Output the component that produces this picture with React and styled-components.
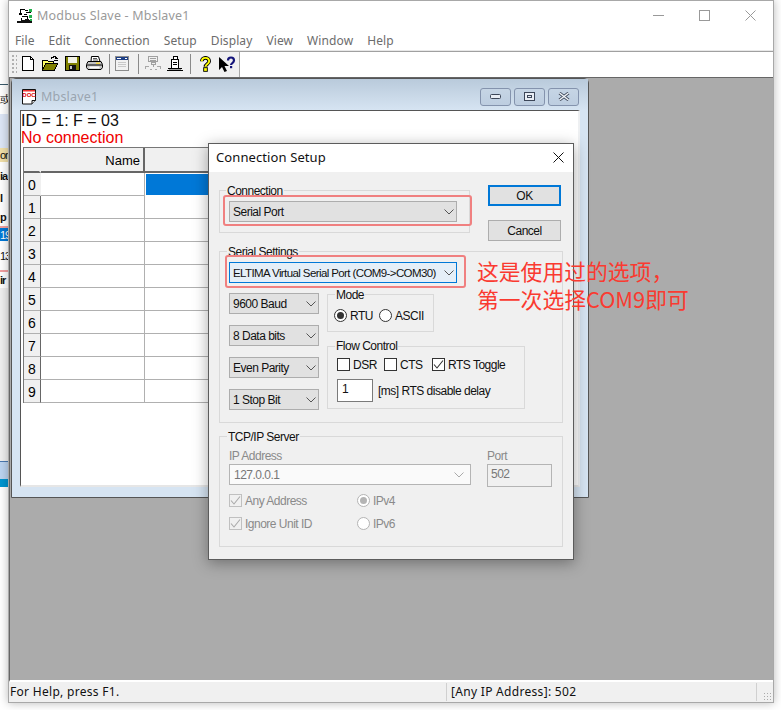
import React from 'react'
import styled, { createGlobalStyle } from 'styled-components'

const GlobalStyle = createGlobalStyle`
  html, body {
    margin: 0;
    padding: 0;
    background: #fff;
  }
  * {
    box-sizing: border-box;
  }
`

const DIALOG_FONT = `"Liberation Sans", Arial, sans-serif`
const UI_FONT = `"Noto Sans", "Open Sans", sans-serif`

const Chevron = ({ color = '#555' }) => (
  <svg width="10" height="6" viewBox="0 0 10 6" style={{ flex: 'none' }}>
    <path d="M.5 .5 5 5 9.500 .5" fill="none" stroke={color} strokeWidth="1" />
  </svg>
)

const Tick = ({ color = '#333' }) => (
  <svg width="11" height="11" viewBox="0 0 11 11">
    <path d="M1 5.500 4 9 10 1.500" fill="none" stroke={color} strokeWidth="1.100" />
  </svg>
)

const AppIcon = () => (
  <svg width="16" height="16" viewBox="0 0 16 16" shapeRendering="crispEdges">
    <path d="M3 1h5v1H3zM3 2h1v3H3zM2 5h3v2H2zM8 2h3v1H8zM9 4h5v1H9zM7 6h3v1H7zM5 8h6v1H5zM10 9h1v2h-1zM4 10h1v2H4z" fill="#000" />
    <path d="M12 1h3v3h-3zM12 7h3v3h-3z" fill="#22b14c" />
    <path d="M0 13h4v-1h4v-1h4v1h3v3H0z" fill="#111" />
    <path d="M13 11h2v2h-2z" fill="#22b14c" />
  </svg>
)

const DocIcon = () => (
  <svg width="16" height="16" viewBox="0 0 16 16">
    <path d="M1.500 .5h13v11l-3.500 3.500h-9.500z" fill="#fff" stroke="#111" />
    <path d="M11 15v-3.500h3.500" fill="#ddd" stroke="#111" />
    <rect x="2" y="1" width="12" height="1.500" fill="#e33" />
    <text x="8" y="8" fontSize="6" fontWeight="700" fontFamily="Liberation Sans" textAnchor="middle" fill="#e00000">DOC</text>
  </svg>
)

const NewIcon = () => (
  <svg width="13" height="15" viewBox="0 0 13 15" shapeRendering="crispEdges">
    <path d="M.5 .5h8l3 3v11H.5z" fill="#fff" stroke="#000" />
    <path d="M8.500 .5v3h3" fill="none" stroke="#000" />
  </svg>
)

const OpenIcon = () => (
  <svg width="18" height="16" viewBox="0 0 18 16" shapeRendering="crispEdges">
    <path d="M1.500 4.500h5l1 1h5v2h-8l-3 7z" fill="#ffff66" stroke="#000" />
    <path d="M1.500 14.500l3-7h12l-3 7z" fill="#808000" stroke="#000" />
    <path d="M9.500 3.500c1-2 3-3 5.500-2.500" fill="none" stroke="#000" />
    <path d="M14 0h1v1h1v1h1v1h-3zM13 4h4v1h-4z" fill="#000" />
  </svg>
)

const SaveIcon = () => (
  <svg width="15" height="15" viewBox="0 0 15 15" shapeRendering="crispEdges">
    <rect x=".5" y=".5" width="14" height="14" fill="#808000" stroke="#000" />
    <rect x="3" y="1" width="9" height="6" fill="#f2f2e6" />
    <rect x="4" y="9" width="7" height="5" fill="#111" />
    <rect x="5" y="10" width="2" height="3" fill="#c8c8c8" />
  </svg>
)

const PrintIcon = () => (
  <svg width="17" height="15" viewBox="0 0 17 15">
    <path d="M5.500 .5h7l1.500 5h-9z" fill="#fff" stroke="#000" />
    <path d="M7 2.500h4M7 4h5" stroke="#555" />
    <path d="M2 5.500h13l1.500 3v3l-1.500 2H2l-1.500-2v-3z" fill="#c4c4c4" stroke="#000" />
    <path d="M1 9h15" stroke="#000" />
    <path d="M3.500 11.500h10" stroke="#fff" strokeWidth="2" />
    <rect x="10" y="6.500" width="4" height="1.500" fill="#f5d84a" />
  </svg>
)

const WindowIcon = () => (
  <svg width="14" height="15" viewBox="0 0 14 15" shapeRendering="crispEdges">
    <rect x=".5" y=".5" width="13" height="14" fill="#f2f2f2" stroke="#8c8c8c" />
    <rect x="1" y="1" width="12" height="3" fill="#1d3f86" />
    <path d="M2 2h4v1H2zM10 2h2v1h-2z" fill="#fff" />
    <path d="M3 6h8v1H3zM3 8h8v1H3zM3 10h8v1H3z" fill="#c9c9c9" />
  </svg>
)

const NetOffIcon = () => (
  <svg width="16" height="15" viewBox="0 0 16 15" shapeRendering="crispEdges">
    <path d="M3.500 .5h9v5h-9zM5 2.500h6M5 4h6M6 6.500h4v2H6zM8 9v2" fill="none" stroke="#a0a0a0" />
    <path d="M0 10h4v1H0zM0 11h1v2H0zM12 10h4v1h-4zM15 11h1v2h-1zM5 13h2v1H5zM10 13h2v1h-2z" fill="#a8a8a8" />
  </svg>
)

const PlugIcon = () => (
  <svg width="16" height="16" viewBox="0 0 16 16" shapeRendering="crispEdges">
    <path d="M6 .5h4v3H6zM4.500 3.500h7v9h-7z" fill="#fff" stroke="#000" />
    <path d="M6 6h4M6 8h4" stroke="#000" />
    <path d="M1 12h14v1H1zM0 14h16v1H0z" fill="#000" />
    <rect x="2" y="13" width="12" height="1" fill="#9a9a9a" />
  </svg>
)

const HelpIcon = () => (
  <svg width="11" height="16" viewBox="0 0 12 16">
    <path d="M2 5c0-5 8-5 8 0 0 3-4 3-4 6" fill="none" stroke="#000" strokeWidth="4" />
    <path d="M2 5c0-5 8-5 8 0 0 3-4 3-4 6" fill="none" stroke="#ffff00" strokeWidth="2" />
    <rect x="4" y="12" width="4" height="4" fill="#ffff00" stroke="#000" />
  </svg>
)

const HelpPointerIcon = () => (
  <svg width="17" height="16" viewBox="0 0 17 16">
    <path d="M0 1v13l3-3 2.500 5 2.500-1-2.500-5H10z" fill="#000" />
    <path d="M9 4.500C9 .5 15 .5 15 4.500c0 2.500-3 2.500-3 4.500" fill="none" stroke="#14147a" strokeWidth="2.200" />
    <rect x="11" y="10" width="2.200" height="2.200" fill="#14147a" />
  </svg>
)

const Desktop = styled.div`
  position: relative;
  width: 781px;
  height: 710px;
  overflow: hidden;
  background: #fff;
`

// the window lying behind Modbus Slave, only a sliver of it is visible
const BackWindow = styled.div`
  position: absolute;
  left: 0;
  top: 84px;
  width: 8px;
  height: 420px;
  display: flex;
  flex-direction: column;
  overflow: hidden;
  font: 700 11px ${DIALOG_FONT};
  letter-spacing: -1px;
  color: #111;
`

const BackRow = styled.div`
  height: ${p => p.$h}px;
  flex: none;
  display: flex;
  align-items: center;
  white-space: nowrap;
  font-weight: ${p => (p.$thin ? 400 : 700)};
  color: ${p => p.$color || '#111'};
  background: ${p => p.$bg || 'transparent'};
  border-top: ${p => (p.$line ? `1px solid ${p.$line}` : 'none')};
`

const MainWindow = styled.div`
  position: absolute;
  left: 8px;
  top: 0;
  width: 766px;
  height: 703px;
  display: flex;
  flex-direction: column;
  background: #fff;
  border: 1px solid #a8a8a8;
  box-shadow: 0 0 9px rgba(0, 0, 0, 0.28);
`

const TitleBar = styled.div`
  height: 29px;
  flex: none;
  display: flex;
  align-items: center;
  padding-left: 8px;
  font: 12.500px ${UI_FONT};
  color: #9a9a9a;
`

const TitleText = styled.span`
  margin-left: 4px;
  letter-spacing: 0.2px;
  flex: 1;
`

const WinButton = styled.div`
  width: 46px;
  height: 29px;
  display: flex;
  align-items: center;
  justify-content: center;
`

const MenuBar = styled.div`
  height: 21px;
  flex: none;
  display: flex;
  align-items: center;
  gap: 14px;
  padding-left: 6px;
  font: 12px ${UI_FONT};
  letter-spacing: 0.1px;
  color: #6c6c6c;
  border-bottom: 1px solid #e8e8e8;
`

const ToolbarRow = styled.div`
  height: 26px;
  flex: none;
  display: flex;
  border-top: 1px solid #a0a0a0;
`

const Toolbar = styled.div`
  width: 231px;
  display: flex;
  align-items: center;
  background: #f0f0f0;
  border-right: 1px solid #a8a8a8;
  padding: 0 0 2px 2px;
`

const Gripper = styled.div`
  width: 6px;
  height: 20px;
  background-image: radial-gradient(#b0b0b0 0.9px, transparent 1px);
  background-size: 4px 4px;
`

const ToolSlot = styled.div`
  width: 22px;
  height: 24px;
  flex: none;
  display: flex;
  align-items: center;
  justify-content: center;
`

const ToolSep = styled.div`
  width: 1px;
  height: 20px;
  flex: none;
  margin: 0 ${p => p.$right}px 0 ${p => p.$left}px;
  background: #8a8a8a;
`

const MdiArea = styled.div`
  position: relative;
  flex: 1;
  background: #ababab;
  border-top: 1px solid #666;
  border-left: 1px solid #666;
  border-bottom: 2px solid #fff;
`

const StatusBar = styled.div`
  height: 20px;
  flex: none;
  display: flex;
  align-items: center;
  position: relative;
  background: #f0f0f0;
  font: 12px ${UI_FONT};
  letter-spacing: 0.3px;
  color: #111;
`

const StatusPane = styled.div`
  width: ${p => p.$w}px;
  height: 18px;
  flex: none;
  padding-left: ${p => p.$pad}px;
  line-height: 18px;
  border-right: 1px solid #d0d0d0;
  white-space: nowrap;
`

const SizeGrip = styled.div`
  position: absolute;
  right: 1px;
  bottom: 1px;
  width: 9px;
  height: 9px;
  background-image: radial-gradient(#aaa 0.9px, transparent 1px);
  background-size: 3px 3px;
`

const ChildWindow = styled.div`
  position: absolute;
  left: 1px;
  top: 0;
  width: 578px;
  height: 420px;
  display: flex;
  flex-direction: column;
  padding: 0 8px 10px 8px;
  background: #d6e4f2;
  border: 1px solid #555;
  border-radius: 5px 5px 0 0;
`

const ChildTitle = styled.div`
  height: 31px;
  flex: none;
  display: flex;
  align-items: center;
  margin: 0 -8px;
  padding: 4px 9px 0 9px;
  background: linear-gradient(#b9cadb, #d6e4f2);
  font: 12.500px ${UI_FONT};
  color: #9aa5b0;
`

const ChildTitleText = styled.span`
  margin-left: 4px;
  letter-spacing: 0.2px;
  flex: 1;
`

const ChildButton = styled.div`
  width: 31px;
  height: 18px;
  margin-left: 3px;
  display: flex;
  align-items: center;
  justify-content: center;
  border: 1px solid #8493ad;
  border-radius: 3px;
  background: linear-gradient(#c6d5e5, #bdcde0);
`

const ChildClient = styled.div`
  flex: 1;
  padding-top: 2px;
  background: #fff;
  border-top: 1px solid #555;
  border-left: 1px solid #555;
  border-right: 2px solid #eef0f2;
  border-bottom: 2px solid #e6e6e6;
  font: 16px/16.500px ${DIALOG_FONT};
  overflow: hidden;
`

const StatusLine = styled.div`
  color: ${p => p.$color || '#111'};
`

const Sheet = styled.div`
  display: grid;
  grid-template-columns: 17px 104px 110px;
  grid-template-rows: 25px repeat(10, 23px);
  width: max-content;
  margin: 1px 0 0 2px;
  font: 13px ${DIALOG_FONT};
  border-top: 1px solid #777;
  border-left: 1px solid #777;
`

const HeadCell = styled.div`
  display: flex;
  align-items: center;
  justify-content: flex-end;
  padding: 1px 3px 0 0;
  background: #f0f0f0;
  border-right: 2px solid ${p => (p.$dark ? '#666' : '#f0f0f0')};
  border-bottom: 2px solid #666;
`

const RowHead = styled.div`
  display: flex;
  align-items: center;
  justify-content: center;
  padding-top: 1px;
  font-size: 14px;
  background: #f0f0f0;
  border-right: 1px solid ${p => (p.$first ? '#f0f0f0' : '#666')};
  border-bottom: 1px solid #b0b0b0;
`

const Cell = styled.div`
  background: ${p => (p.$selected ? '#0078d7' : '#fff')};
  border-right: 1px solid #b0b0b0;
  border-bottom: 1px solid #b0b0b0;
  outline: ${p => (p.$selected ? '1px solid #fff' : 'none')};
  outline-offset: -1px;
`

const Dialog = styled.div`
  position: absolute;
  left: 208px;
  top: 143px;
  width: 366px;
  height: 417px;
  display: flex;
  flex-direction: column;
  background: #f0f0f0;
  border: 1px solid #5c5c5c;
  box-shadow: 0 3px 14px rgba(0, 0, 0, 0.35);
  font: 12px ${DIALOG_FONT};
  letter-spacing: -0.5px;
  color: #111;
`

const DialogTitle = styled.div`
  height: 28px;
  flex: none;
  display: flex;
  align-items: center;
  justify-content: space-between;
  padding: 0 9px 2px 7px;
  background: #fff;
  font: 13px ${UI_FONT};
  letter-spacing: 0.1px;
`

const DialogBody = styled.div`
  flex: 1;
  padding: 13px 10px 0 10px;
  display: flex;
  flex-direction: column;
`

const TopRow = styled.div`
  display: flex;
  justify-content: space-between;
  width: 342px;
  margin-bottom: 10px;
`

const Group = styled.div`
  position: relative;
  width: ${p => p.$w}px;
  height: ${p => p.$h}px;
  flex: none;
  margin-top: ${p => p.$top || 0}px;
  padding: ${p => p.$pad || '0'};
  border: 1px solid #d9d9d9;
`

const Legend = styled.span`
  position: absolute;
  left: ${p => p.$left ?? 7}px;
  top: ${p => p.$top ?? -6}px;
  padding: 0 1px;
  line-height: 13px;
  background: #f0f0f0;
`

const ButtonColumn = styled.div`
  display: flex;
  flex-direction: column;
  gap: 14px;
`

const DialogButton = styled.div`
  width: 73px;
  height: 21px;
  display: flex;
  align-items: center;
  justify-content: center;
  background: #e1e1e1;
  border: ${p => (p.$primary ? '2px solid #0078d7' : '1px solid #adadad')};
`

const Select = styled.div`
  width: ${p => p.$w}px;
  height: 21px;
  flex: none;
  display: flex;
  align-items: center;
  padding: 0 2px 0 3px;
  background: ${p => (p.$focus ? '#e5eff8' : '#e1e1e1')};
  border: 1px solid ${p => (p.$focus ? '#0078d7' : '#adadad')};
`

const SelectText = styled.span`
  flex: 1;
  min-width: 0;
  margin-right: 4px;
  overflow: hidden;
  white-space: nowrap;
  font-size: ${p => (p.$tight ? '11.500px' : 'inherit')};
  letter-spacing: ${p => (p.$tight ? '-0.6px' : 'inherit')};
`

const SerialRow = styled.div`
  display: flex;
  margin-top: 10px;
`

const SelectStack = styled.div`
  width: 98px;
  display: flex;
  flex-direction: column;
  gap: 11px;
`

const SideStack = styled.div`
  display: flex;
  flex-direction: column;
`

const OptionRow = styled.div`
  display: flex;
  align-items: center;
`

const Option = styled.div`
  width: ${p => (p.$w ? `${p.$w}px` : 'auto')};
  height: 13px;
  flex: none;
  display: flex;
  align-items: center;
  gap: 3px;
  white-space: nowrap;
  color: ${p => (p.$disabled ? '#8a8a8a' : '#111')};
`

const Radio = styled.div`
  width: 13px;
  height: 13px;
  flex: none;
  display: flex;
  align-items: center;
  justify-content: center;
  border-radius: 50%;
  background: #fff;
  border: 1px solid ${p => (p.$disabled ? '#b4b4b4' : '#333')};
  &::after {
    content: '';
    display: ${p => (p.$on ? 'block' : 'none')};
    width: 7px;
    height: 7px;
    border-radius: 50%;
    background: ${p => (p.$disabled ? '#b4b4b4' : '#333')};
  }
`

const Checkbox = styled.div`
  width: 13px;
  height: 13px;
  flex: none;
  display: flex;
  align-items: center;
  justify-content: center;
  background: ${p => (p.$disabled ? '#f0f0f0' : '#fff')};
  border: 1px solid ${p => (p.$disabled ? '#c0c0c0' : '#333')};
`

const DelayRow = styled.div`
  display: flex;
  align-items: center;
  margin-top: 8px;
  gap: 5px;
  white-space: nowrap;
`

const NumberBox = styled.div`
  width: 36px;
  height: 23px;
  padding: 2px 0 0 4px;
  background: #fff;
  border: 1px solid #7a7a7a;
`

const TcpFields = styled.div`
  display: grid;
  grid-template-columns: 242px 65px;
  column-gap: 16px;
  align-items: start;
`

const FieldLabel = styled.div`
  line-height: 14px;
  margin-bottom: 1px;
  color: #8a8a8a;
`

const AddressBox = styled.div`
  height: 21px;
  display: flex;
  align-items: center;
  justify-content: space-between;
  padding: 0 6px 0 4px;
  color: #777;
  background: #fafafa;
  border: 1px solid #b4b4b4;
`

const PortBox = styled.div`
  height: 23px;
  padding: 2px 0 0 3px;
  color: #777;
  background: #f0f0f0;
  border: 1px solid #b4b4b4;
`

const TcpOptions = styled.div`
  display: flex;
  flex-direction: column;
  gap: 10px;
  margin-top: 7px;
`

const RedFrame = styled.div`
  position: absolute;
  left: ${p => p.$x}px;
  top: ${p => p.$y}px;
  width: ${p => p.$w}px;
  height: ${p => p.$h}px;
  border: 2px solid #f08080;
  border-radius: 3px;
  pointer-events: none;
`

const Note = styled.div`
  position: absolute;
  left: 477px;
  top: 257px;
  font: 21.800px/28px "Noto Sans CJK SC", "Noto Sans", sans-serif;
  color: #fa3a30;
  white-space: nowrap;
`

const menus = ['File', 'Edit', 'Connection', 'Setup', 'Display', 'View', 'Window', 'Help']
const rows = [0, 1, 2, 3, 4, 5, 6, 7, 8, 9]
const serialSelects = ['9600 Baud', '8 Data bits', 'Even Parity', '1 Stop Bit']

const App = () => {
  return (
    <Desktop>
      <GlobalStyle />

      <BackWindow>
        <BackRow $h={30} $line="#3a5a6a" $thin>或</BackRow>
        <BackRow $h={34} $bg="#dde6f6" />
        <BackRow $h={14} $bg="#f1dfa8" $thin>or</BackRow>
        <BackRow $h={27}>ia</BackRow>
        <BackRow $h={18}>l</BackRow>
        <BackRow $h={19}>p</BackRow>
        <BackRow $h={2} $bg="#f2a0a0" />
        <BackRow $h={13} $bg="#0078d7" $color="#fff" $thin>19</BackRow>
        <BackRow $h={29} $thin>13</BackRow>
        <BackRow $h={2} $bg="#f2a0a0" />
        <BackRow $h={16}>ir</BackRow>
        <BackRow $h={173} $bg="#efefef" />
        <BackRow $h={18} $line="#4a78b0" $bg="#bcd4f0" />
        <BackRow $h={8} $bg="#0095d0" />
      </BackWindow>

      <MainWindow>
        <TitleBar>
          <AppIcon />
          <TitleText>Modbus Slave - Mbslave1</TitleText>
          <WinButton>
            <svg width="11" height="11" viewBox="0 0 11 11"><path d="M0 5.500h11" stroke="#999" /></svg>
          </WinButton>
          <WinButton>
            <svg width="11" height="11" viewBox="0 0 11 11"><rect x=".5" y=".5" width="10" height="10" fill="none" stroke="#999" /></svg>
          </WinButton>
          <WinButton>
            <svg width="11" height="11" viewBox="0 0 11 11"><path d="M.5 .5l10 10M10.500 .5l-10 10" stroke="#999" /></svg>
          </WinButton>
        </TitleBar>

        <MenuBar>
          {menus.map(m => <span key={m}>{m}</span>)}
        </MenuBar>

        <ToolbarRow>
          <Toolbar>
            <Gripper />
            <ToolSlot><NewIcon /></ToolSlot>
            <ToolSlot><OpenIcon /></ToolSlot>
            <ToolSlot><SaveIcon /></ToolSlot>
            <ToolSlot><PrintIcon /></ToolSlot>
            <ToolSep $left={4} $right={1} />
            <ToolSlot><WindowIcon /></ToolSlot>
            <ToolSep $left={5} $right={3} />
            <ToolSlot><NetOffIcon /></ToolSlot>
            <ToolSlot><PlugIcon /></ToolSlot>
            <ToolSep $left={4} $right={3} />
            <ToolSlot><HelpIcon /></ToolSlot>
            <ToolSlot><HelpPointerIcon /></ToolSlot>
          </Toolbar>
        </ToolbarRow>

        <MdiArea>
          <ChildWindow>
            <ChildTitle>
              <DocIcon />
              <ChildTitleText>Mbslave1</ChildTitleText>
              <ChildButton>
                <svg width="11" height="5" viewBox="0 0 11 5"><rect x=".5" y=".5" width="10" height="4" rx="1" fill="#e8edf4" stroke="#3c4658" /></svg>
              </ChildButton>
              <ChildButton>
                <svg width="11" height="9" viewBox="0 0 11 9" shapeRendering="crispEdges"><rect x=".5" y=".5" width="10" height="8" fill="#e8edf4" stroke="#3c4658" /><rect x="3.500" y="3.500" width="4" height="2" fill="none" stroke="#3c4658" /></svg>
              </ChildButton>
              <ChildButton>
                <svg width="12" height="9" viewBox="0 0 12 9"><path d="M1.500 1l9 7M10.500 1l-9 7" stroke="#3c4658" strokeWidth="3" /><path d="M1.500 1l9 7M10.500 1l-9 7" stroke="#f4f6f9" strokeWidth="1.500" /></svg>
              </ChildButton>
            </ChildTitle>
            <ChildClient>
              <StatusLine>ID = 1: F = 03</StatusLine>
              <StatusLine $color="#f00000">No connection</StatusLine>
              <Sheet>
                <HeadCell />
                <HeadCell $dark>Name</HeadCell>
                <HeadCell />
                {rows.map(r => (
                  <React.Fragment key={r}>
                    <RowHead $first={r === 0}>{r}</RowHead>
                    <Cell />
                    <Cell $selected={r === 0} />
                  </React.Fragment>
                ))}
              </Sheet>
            </ChildClient>
          </ChildWindow>
        </MdiArea>

        <StatusBar>
          <StatusPane $w={438} $pad={1}>For Help, press F1.</StatusPane>
          <StatusPane $w={310} $pad={4}>[Any IP Address]: 502</StatusPane>
          <SizeGrip />
        </StatusBar>
      </MainWindow>

      <Dialog>
        <DialogTitle>
          <span>Connection Setup</span>
          <svg width="11" height="11" viewBox="0 0 11 11"><path d="M.5 .5l10 10M10.500 .5l-10 10" stroke="#111" /></svg>
        </DialogTitle>
        <DialogBody>
          <TopRow>
            <Group $w={251} $h={43} $top={5} $pad="10px 0 0 9px">
              <Legend $left={6}>Connection</Legend>
              <Select $w={228}><SelectText>Serial Port</SelectText><Chevron /></Select>
            </Group>
            <ButtonColumn>
              <DialogButton $primary>OK</DialogButton>
              <DialogButton>Cancel</DialogButton>
            </ButtonColumn>
          </TopRow>

          <Group $w={344} $h={172} $pad="10px 0 0 9px">
            <Legend>Serial Settings</Legend>
            <Select $w={228} $focus>
              <SelectText $tight>ELTIMA Virtual Serial Port (COM9-&gt;COM30)</SelectText>
              <Chevron />
            </Select>
            <SerialRow>
              <SelectStack>
                {serialSelects.map(s => (
                  <Select key={s} $w={90}><SelectText>{s}</SelectText><Chevron /></Select>
                ))}
              </SelectStack>
              <SideStack>
                <Group $w={107} $h={38} $top={1} $pad="14px 0 0 6px">
                  <Legend>Mode</Legend>
                  <OptionRow>
                    <Option $w={45}><Radio $on />RTU</Option>
                    <Option><Radio />ASCII</Option>
                  </OptionRow>
                </Group>
                <Group $w={198} $h={63} $top={14} $pad="11px 0 0 9px">
                  <Legend $top={-7}>Flow Control</Legend>
                  <OptionRow>
                    <Option $w={47}><Checkbox />DSR</Option>
                    <Option $w={48}><Checkbox />CTS</Option>
                    <Option><Checkbox><Tick /></Checkbox>RTS Toggle</Option>
                  </OptionRow>
                  <DelayRow>
                    <NumberBox>1</NumberBox>
                    [ms] RTS disable delay
                  </DelayRow>
                </Group>
              </SideStack>
            </SerialRow>
          </Group>

          <Group $w={344} $h={111} $top={13} $pad="12px 0 0 9px">
            <Legend>TCP/IP Server</Legend>
            <TcpFields>
              <div>
                <FieldLabel>IP Address</FieldLabel>
                <AddressBox>127.0.0.1 <Chevron color="#aaa" /></AddressBox>
              </div>
              <div>
                <FieldLabel>Port</FieldLabel>
                <PortBox>502</PortBox>
              </div>
            </TcpFields>
            <TcpOptions>
              <OptionRow>
                <Option $w={128} $disabled><Checkbox $disabled><Tick color="#aaa" /></Checkbox>Any Address</Option>
                <Option $disabled><Radio $on $disabled /><span>IPv4</span></Option>
              </OptionRow>
              <OptionRow>
                <Option $w={128} $disabled><Checkbox $disabled><Tick color="#aaa" /></Checkbox>Ignore Unit ID</Option>
                <Option $disabled><Radio $disabled /><span>IPv6</span></Option>
              </OptionRow>
            </TcpOptions>
          </Group>
        </DialogBody>
      </Dialog>

      <RedFrame $x={223} $y={195} $w={249} $h={31} />
      <RedFrame $x={225} $y={255} $w={241} $h={33} />
      <Note>
        这是使用过的选项，<br />第一次选择COM9即可
      </Note>
    </Desktop>
  )
}

export default App
